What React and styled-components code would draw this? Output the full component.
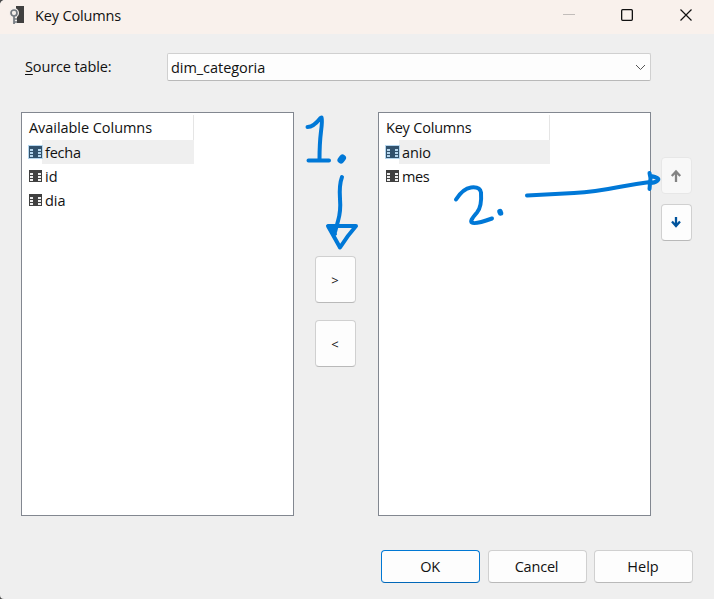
import React from "react";
import styled, { createGlobalStyle } from "styled-components";

const Global = createGlobalStyle`
  * { box-sizing: border-box; }
  body { margin: 0; background: #4a4a4a; overflow: hidden; }
`;

const Dialog = styled.div`
  position: relative;
  width: 714px;
  height: 599px;
  background: #efefef;
  color: #111;
  font: 14.5px/20px "Open Sans", "Noto Sans", sans-serif;
  border-radius: 5px 0 0 4px;
  overflow: hidden;
`;

const TitleBar = styled.header`
  display: flex;
  height: 34px;
  padding-left: 9px;
  background: #f9f1ec;
`;

const Title = styled.div`
  flex: 1;
  padding: 6px 0 0 10px;
`;

const Text = styled.span`
  white-space: nowrap;
  letter-spacing: ${(p) => p.$track || 0}px;
`;

const RowText = styled(Text)`
  padding-top: 2px;
`;

const TitleIcon = styled.svg`
  margin-top: 5px;
`;

const WindowControls = styled.div`
  display: grid;
  grid-template-columns: 58px 58px 60px;
  width: 174px;
  height: 30px;
  place-items: center;
`;

const SourceRow = styled.div`
  display: flex;
  align-items: center;
  height: 28px;
  margin: 19px 0 0 25px;
`;

const Label = styled.label`
  width: 142px;
  u { text-underline-offset: 2px; text-decoration-thickness: 1px; }
`;

const Select = styled.div`
  display: flex;
  align-items: center;
  justify-content: space-between;
  width: 484px;
  height: 28px;
  padding: 1px 4px 0 3px;
  background: #fdfdfd;
  border: 1px solid #d0d0d0;
  border-bottom-color: #b9b9b9;
  border-radius: 2px;
`;

const Body = styled.main`
  display: flex;
  height: 404px;
  margin: 31px 0 0 21px;
`;

const List = styled.section`
  width: 273px;
  height: 404px;
  padding: 2px ${(p) => 271 - p.$column}px 0 0;
  background: #fff;
  border: 1px solid #828790;
`;

const ListHeader = styled.div`
  height: 25px;
  padding: 3px 0 0 7px;
  border-right: 1px solid #e5e5e5;
`;

const Row = styled.div`
  display: flex;
  align-items: center;
  height: 24px;
  padding-left: 6px;
  background: ${(p) => (p.$selected ? "linear-gradient(90deg, #fff 20px, #efefef 20px)" : "#fff")};
`;

const ColumnIcon = styled.svg`
  flex: none;
  margin-right: 2px;
`;

const TransferButtons = styled.div`
  display: flex;
  flex-direction: column;
  width: 84px;
  padding: 144px 0 0 21px;
  gap: 17px;
`;

const Button = styled.button`
  display: flex;
  align-items: center;
  justify-content: center;
  width: ${(p) => p.$w}px;
  height: ${(p) => p.$h}px;
  padding: 0 1px 0 0;
  color: #111;
  font: inherit;
  background: ${(p) => (p.disabled ? "#f8f8f8" : "#fdfdfd")};
  border: 1px solid ${(p) => (p.$primary ? "#0078d4" : p.disabled ? "#e7e7e7" : "#d0d0d0")};
  border-bottom-color: ${(p) => (p.$primary ? "#0067b8" : p.disabled ? "#e7e7e7" : "#b9b9b9")};
  border-radius: 4px;
`;

const Chevron = styled.span`
  font-size: 13px;
  padding-top: 1px;
`;

const OrderButtons = styled.div`
  display: flex;
  flex-direction: column;
  padding: 45px 0 0 10px;
  gap: 10px;
`;

const Footer = styled.footer`
  display: flex;
  gap: 7.5px;
  margin: 34px 0 0 381px;
`;

const Ink = styled.svg`
  position: absolute;
  left: 0;
  top: 0;
  pointer-events: none;
`;

function TableColumn({ name, selected, track = -0.3 }) {
  return (
    <Row $selected={selected}>
      <ColumnIcon width="15" height="14" viewBox="0 0 15 14" shapeRendering="crispEdges">
        {selected && <rect width="15" height="14" fill="#b5d6ee" />}
        <rect x="1" y="1" width="13" height="12" fill={selected ? "#32526d" : "#404040"} />
        {[4, 7, 10].map((y) => (
          <path key={y} d={`M2 ${y}h3v2h-3zM10 ${y}h3v2h-3z`} fill={selected ? "#b5d6ee" : "#eee"} />
        ))}
      </ColumnIcon>
      <RowText $track={track}>{name}</RowText>
    </Row>
  );
}

function Arrow({ down, color }) {
  return (
    <svg width="12" height="14" viewBox="0 0 12 14" fill="none" stroke={color} strokeWidth="2.3">
      <path d={down ? "M6 1v9.500M2 5.500l4 4.500 4-4.500" : "M6 13V3M1.800 7l4.200-4.500L10.200 7"} />
    </svg>
  );
}

export default function App() {
  return (
    <Dialog>
      <Global />
      <TitleBar>
        <TitleIcon width="16" height="20" viewBox="0 0 16 20">
          <path d="M7 1h8v17H7z" fill="#404040" />
          <g fill="none" stroke="#f3eeea" strokeWidth="4"><circle cx="5" cy="8" r="3" /><path d="M5 11v7M5 14h3M5 17h3" /></g>
          <g fill="none" stroke="#737980" strokeWidth="1.7"><circle cx="5" cy="8" r="3" /><path d="M5 11v8M5 14h3M5 17h3" /></g>
        </TitleIcon>
        <Title><Text $track={-0.15}>Key Columns</Text></Title>
        <WindowControls>
          <svg width="12" height="12"><path d="M0 5.5h12" stroke="#c2bdba" /></svg>
          <svg width="12" height="12"><rect x=".65" y=".65" width="10.7" height="10.7" rx="1" fill="none" stroke="#111" strokeWidth="1.3" /></svg>
          <svg width="12" height="12"><path d="M.5.5l11 11M11.5.5l-11 11" stroke="#111" strokeWidth="1.2" /></svg>
        </WindowControls>
      </TitleBar>
      <SourceRow>
        <Label><Text $track={-0.13}><u>S</u>ource table:</Text></Label>
        <Select>
          <Text $track={-0.05}>dim_categoria</Text>
          <svg width="11" height="7"><path d="M1 1l4.5 4.5L10 1" fill="none" stroke="#555" /></svg>
        </Select>
      </SourceRow>
      <Body>
        <List $column={172}>
          <ListHeader><Text $track={-0.05}>Available Columns</Text></ListHeader>
          <TableColumn name="fecha" selected track={-0.2} />
          <TableColumn name="id" track={0} />
          <TableColumn name="dia" track={0} />
        </List>
        <TransferButtons>
          <Button $w={41} $h={47}><Chevron>&gt;</Chevron></Button>
          <Button $w={41} $h={47}><Chevron>&lt;</Chevron></Button>
        </TransferButtons>
        <List $column={171}>
          <ListHeader><Text $track={-0.2}>Key Columns</Text></ListHeader>
          <TableColumn name="anio" selected track={-0.15} />
          <TableColumn name="mes" track={-0.4} />
        </List>
        <OrderButtons>
          <Button $w={31} $h={37} disabled><Arrow color="#838383" /></Button>
          <Button $w={31} $h={37}><Arrow down color="#00539c" /></Button>
        </OrderButtons>
      </Body>
      <Footer>
        <Button $w={99} $h={33} $primary><Text $track={-0.3}>OK</Text></Button>
        <Button $w={99} $h={33}><Text $track={-0.2}>Cancel</Text></Button>
        <Button $w={99} $h={33}><Text $track={0}>Help</Text></Button>
      </Footer>
      <Ink width="714" height="599" fill="none" stroke="#0078d7" strokeWidth="4" strokeLinecap="round" strokeLinejoin="round">
        <path d="M307.500 127q6 0 13-9l1-.5q1 3-.5 14-1.500 12-1.500 28M308.500 160.500h20.500M342 177q-3 8-2 22 1 12-2 22l-3 11M328 226h28q-8 9-16 21.500zM332 228l3 6" />
        <path d="M341 160l1.500-2" strokeWidth="7" />
        <path d="M456 199.500q7-11 15-12 9-1 10 5 1 14-4 20-8 9-5 10 3 2 20-4" />
        <path d="M500 211.500l.5 1.500" strokeWidth="5.500" />
        <path d="M527 195.500l47-2.500q20-1 45-6 16-3 31-5M649.500 173l1 5-1 11M651 176q9 2 7 4-1 2-7 3" />
      </Ink>
    </Dialog>
  );
}
